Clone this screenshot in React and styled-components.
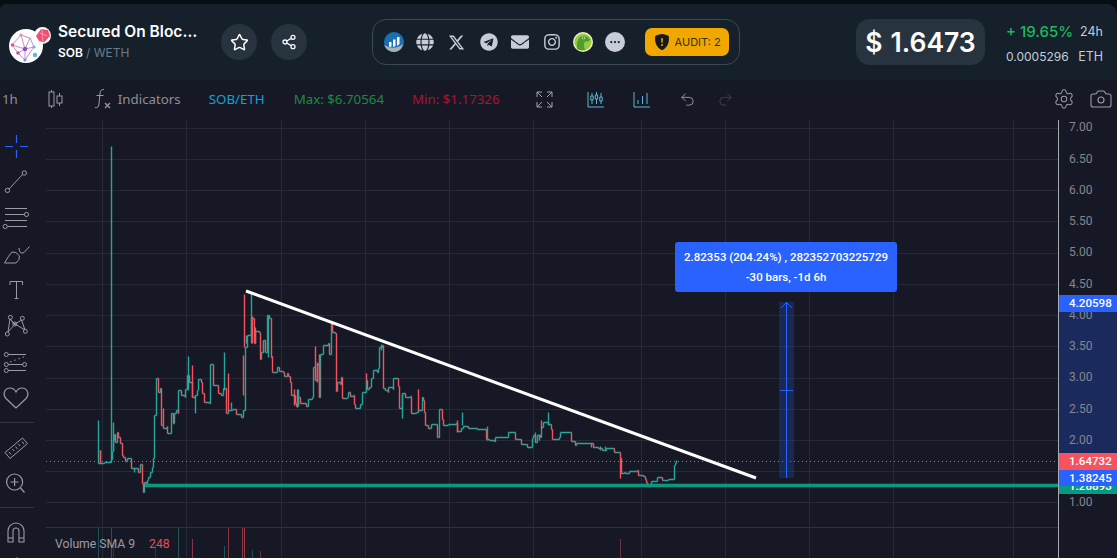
import React from 'react';
import styled, { createGlobalStyle } from 'styled-components';
import { FaGlobe, FaTelegram, FaEnvelope, FaInstagram } from 'react-icons/fa';
import { FaXTwitter } from 'react-icons/fa6';
import { BsShieldFillExclamation, BsThreeDots } from 'react-icons/bs';
import { Star, Share2, Settings, Camera, Undo2, Redo2 } from 'lucide-react';

const GlobalStyle = createGlobalStyle`
    html, body {
        margin: 0;
        padding: 0;
        background: #161925;
        overflow: hidden;
    }
    * { box-sizing: border-box; }
`

const Page = styled.div`
    width: 1117px;
    height: 558px;
    display: flex;
    flex-direction: column;
    overflow: hidden;
    background: #070e13;
    font-family: Inter, "Noto Sans", sans-serif;
`
const Header = styled.header`
    height: 76px;
    margin-top: 4px;
    flex: none;
    display: flex;
    align-items: center;
    background: #15202a;
    border-radius: 6px 10px 0 0;
`
const Avatar = styled.div`
    position: relative;
    width: 32px;
    height: 34px;
    margin-left: 9px;
    margin-top: 8px;
    flex: none;
`
const Badge = styled.div`
    position: absolute;
    top: -2px;
    left: 25px;
    width: 17px;
    height: 17px;
`
const TitleBlock = styled.div`
    margin-left: 17px;
    width: 148px;
    flex: none;
`
const Title = styled.div`
    color: #fff;
    font-size: 15.5px;
    font-weight: 600;
    line-height: 20px;
    white-space: nowrap;
    overflow: hidden;
    text-overflow: ellipsis;
    width: 143px;
`
const Pair = styled.div`
    margin-top: 2px;
    font-size: 12px;
    line-height: 18px;
    color: #fff;
    font-weight: 600;

    span { color: #6b7a8c; font-weight: 400; }
`
const RoundButton = styled.button`
    width: 36px;
    height: 36px;
    margin-left: ${p => p.$ml}px;
    border: 0;
    padding: 0;
    border-radius: 50%;
    background: #273440;
    color: #fff;
    display: flex;
    align-items: center;
    justify-content: center;
    flex: none;
`
const Socials = styled.div`
    margin-left: 65px;
    width: 368px;
    height: 46px;
    flex: none;
    display: flex;
    align-items: center;
    border: 1px solid #3a4957;
    border-radius: 14px;
    padding-left: 5px;
`
const Social = styled.div`
    width: 31.6px;
    height: 24px;
    flex: none;
    display: flex;
    align-items: center;
    justify-content: center;
    color: #c7ccd8;
`
const MoreDot = styled.div`
    width: 20px;
    height: 20px;
    border-radius: 50%;
    background: #c7ccd8;
    color: #15202a;
    display: flex;
    align-items: center;
    justify-content: center;
`
const Audit = styled.div`
    margin-left: 14.4px;
    width: 84px;
    height: 28px;
    flex: none;
    border-radius: 7px;
    background: #f0a800;
    color: #3b2d08;
    font-size: 11px;
    display: flex;
    align-items: center;
    justify-content: center;
    gap: 5px;
    white-space: nowrap;
    svg { color: #14181f; }
`
const PriceBox = styled.div`
    margin-left: 116px;
    width: 129px;
    height: 46px;
    flex: none;
    border-radius: 14px;
    background: #273440;
    color: #fff;
    font-size: 26.5px;
    font-weight: 600;
    display: flex;
    align-items: center;
    justify-content: center;
    white-space: nowrap;
    gap: 8px;
`
const Stats = styled.div`
    margin-left: 21px;
    width: 97px;
    flex: none;
    display: flex;
    flex-direction: column;
    gap: 8px;
    padding-top: 3px;
`
const StatRow = styled.div`
    display: flex;
    justify-content: space-between;
    align-items: center;
    height: 17px;
    font-size: ${p => p.$big ? 15 : 12}px;
    color: #c3ccd9;
    white-space: nowrap;
`
const Up = styled.span`
    color: #1fb85f;
    font-weight: 500;
`
const Small = styled.span`
    font-size: 12.5px;
    color: #c3ccd9;
    font-weight: 400;
`
const Toolbar = styled.div`
    height: 40px;
    flex: none;
    display: flex;
    align-items: center;
    padding-bottom: 2px;
    background: #161925;
    color: #8d8f97;
    font-family: "Noto Sans", sans-serif;
    font-size: 13.3px;
    white-space: nowrap;
`
const BarItem = styled.div`
    margin-left: ${p => p.$ml || 0}px;
    flex: none;
    display: flex;
    align-items: center;
    justify-content: center;
    color: ${p => p.$color || 'inherit'};
`
const Main = styled.div`
    flex: 1;
    min-height: 0;
    display: flex;
    background: #161925;
`
const Tools = styled.aside`
    width: 46px;
    flex: none;
    padding-top: 8px;
    overflow: hidden;
`
const Tool = styled.div`
    width: 33px;
    height: 36px;
    svg { display: block; }
`
const ToolSep = styled.div`
    width: 34px;
    height: 1px;
    margin: 6px 0;
    background: #33363f;
`
const Plot = styled.div`
    position: relative;
    width: 1012px;
    flex: none;
    svg { display: block; }
`
const Measure = styled.div`
    position: absolute;
    left: 629px;
    top: 122px;
    width: 222px;
    height: 50px;
    border-radius: 3px;
    background: #2962ff;
    color: #fff;
    font-family: Roboto, sans-serif;
    font-size: 11.5px;
    font-weight: 500;
    line-height: 20px;
    text-align: center;
    padding-top: 5px;
    white-space: nowrap;
`
const Legend = styled.div`
    position: absolute;
    left: 9px;
    top: 416px;
    display: flex;
    gap: 14px;
    font-family: Roboto, sans-serif;
    font-size: 12.2px;
    line-height: 16px;
    color: #9a9ca3;

    b { color: #e0505c; font-weight: 400; }
`
const Axis = styled.div`
    position: relative;
    flex: 1;
    border-left: 1px solid #a9abb2;
    overflow: hidden;
    font-family: Roboto, sans-serif;
    font-size: 12px;
    color: #84868e;
`
const AxisRange = styled.div`
    position: absolute;
    left: 0;
    right: 0;
    top: 182px;
    height: 176px;
    background: #1b2a5c;
`
const AxisLabels = styled.div`
    position: relative;
    margin-top: -7.6px;
    padding-left: 10px;
`
const AxisLabel = styled.div`
    height: 31.25px;
    line-height: 31.25px;
`
const Tag = styled.div`
    position: absolute;
    left: 0;
    right: 0;
    top: ${p => p.$top}px;
    height: ${p => p.$h || 17}px;
    background: ${p => p.$bg};
    color: #fff;
    font-size: 11.6px;
    font-weight: 500;
    line-height: 17px;
    padding-left: 10px;
`

// price trace in page coordinates, drawn as steps
const trace = [[98,463],[100,450],[100,463],[104,462],[110,462],[111,459],[112,451],[113,440],[114,434],[115,442],[117,432],[118,437],[120,443],[122,443],[122,455],[123,457],[125,461],[127,458],[131,458],[131,468],[138,468],[138,472],[140,464],[142,464],[142,483],[143,483],[143,492],[144,482],[146,482],[146,486],[147,480],[148,477],[150,477],[150,472],[152,467],[153,458],[154,435],[154,415],[156,390],[156,378],[158,378],[158,392],[160,388],[161,388],[161,425],[163,428],[167,426],[167,433],[171,433],[171,413],[172,413],[173,423],[174,413],[176,410],[178,413],[178,390],[181,395],[185,397],[185,389],[187,375],[189,382],[190,382],[192,397],[195,395],[197,390],[198,379],[201,382],[202,393],[204,402],[209,403],[210,364],[213,364],[213,385],[218,385],[218,393],[221,395],[223,388],[226,388],[226,413],[228,410],[232,409],[236,409],[236,414],[239,414],[241,417],[243,410],[245,355],[245,347],[247,335],[250,334],[251,318],[254,343],[255,331],[259,332],[260,359],[261,352],[263,340],[265,352],[267,315],[269,318],[271,357],[272,356],[272,372],[277,367],[279,371],[283,372],[284,376],[287,373],[288,376],[290,382],[291,395],[295,403],[296,406],[298,397],[300,403],[303,403],[306,406],[308,399],[312,397],[313,367],[315,380],[317,364],[319,397],[320,354],[323,345],[328,343],[329,354],[331,323],[332,332],[335,333],[336,391],[337,382],[340,384],[341,377],[342,377],[342,398],[347,397],[348,392],[350,396],[353,395],[354,404],[355,408],[358,408],[360,404],[362,392],[365,392],[366,380],[367,389],[369,387],[371,378],[373,370],[377,372],[378,368],[379,347],[382,345],[383,388],[385,390],[388,392],[388,387],[392,387],[393,389],[393,378],[398,378],[398,386],[399,408],[402,393],[405,397],[410,396],[411,396],[411,413],[416,412],[418,410],[422,397],[423,400],[424,412],[425,425],[428,428],[431,424],[437,424],[437,437],[439,409],[442,419],[443,425],[448,424],[456,423],[457,431],[461,428],[463,426],[468,428],[475,428],[477,429],[485,429],[486,439],[489,440],[494,441],[495,437],[507,437],[508,432],[513,432],[515,439],[519,439],[521,444],[526,444],[527,447],[531,447],[532,438],[533,435],[535,442],[537,435],[540,437],[541,427],[543,422],[548,424],[551,429],[552,439],[559,437],[560,432],[570,432],[571,441],[575,441],[575,445],[576,443],[592,443],[593,447],[598,448],[602,450],[606,450],[606,448],[613,448],[614,452],[618,452],[620,458],[621,473],[624,472],[625,473],[628,473],[629,471],[637,470],[638,475],[643,476],[645,479],[646,482],[647,486],[650,486],[651,481],[656,481],[657,477],[662,477],[662,480],[668,479],[670,479],[673,479],[674,465],[675,463],[676,460]]

// wicks that stick out of the trace
const wicks = [
    [98,420,463,0],[111,146,460,0],[113,422,451,0],[134,468,472,0],[163,408,425,1],[188,356,390,0],[192,365,397,1],
    [195,395,413,0],[224,352,390,0],[228,373,410,1],[231,402,409,0],[243,355,395,1],[244,294,347,1],[246,335,343,0],
    [251,293,343,0],[252,316,343,1],[255,327,343,1],[263,340,352,0],[268,315,357,0],[294,389,405,1],[297,389,407,1],
    [298,389,405,0],[315,346,380,1],[317,362,382,1],[319,354,397,1],[366,373,380,1],[381,344,350,0],[402,393,418,0],
    [418,389,410,1],[462,412,425,0],[457,420,432,1],[487,426,440,0],[620,458,478,1],[541,420,428,1],[548,412,425,0],
    [535,432,442,0],[539,434,440,0],[600,446,450,0],[605,446,450,0],[591,443,447,1],
]

const volumes = [
    [98,528,0,.4],[111,528,0,.45],[113,543,0,.3],[155,545,0,.25],[178,528,0,.45],[192,539,1,.5],[224,546,0,.45],
    [228,528,1,.5],[242,528,1,.55],[244,528,1,.6],[252,550,0,.4],[260,551,1,.4],[620,539,1,.4],
]

const teal = '#26a69a'
const red = '#f7525f'

function buildSegments(points){
    let up = ''
    let down = ''
    points.forEach(([x, y], i) => {
        if(i === 0) return
        const [px, py] = points[i - 1]
        up += `M${px} ${py}H${x}`
        if(y > py) down += `M${x} ${py}V${y}`
        if(y < py) up += `M${x} ${py}V${y}`
    })
    return { up, down }
}

const hLines = [128,159,190,221,253,284,315,346,378,409,440,471,502]
const vLines = [102,186,281,365,449,533,641,725,809,893,1013]
const labels = ['7.00','6.50','6.00','5.50','5.00','4.50','4.00','3.50','3.00','2.50','2.00','1.50','1.00']

function PriceChart(){
    const { up, down } = buildSegments(trace)
    return (
        <svg width="1012" height="438" viewBox="46 120 1012 438">
            {hLines.map(y => <line key={y} x1="46" x2="1058" y1={y + .5} y2={y + .5} stroke="#272a36" />)}
            <line x1="46" x2="1058" y1="527.5" y2="527.5" stroke="#2f323c" />
            {vLines.map(x => <line key={x} x1={x + .5} x2={x + .5} y1="120" y2="558" stroke="#272a36" />)}
            {volumes.map(([x, y, r, o], i) => (
                <line key={i} x1={x + .5} x2={x + .5} y1={y} y2="558" stroke={r ? red : teal} strokeOpacity={o} />
            ))}
            <line x1="46" x2="1058" y1="461.5" y2="461.5" stroke={red} strokeDasharray="1 3" />
            <rect x="779" y="302" width="15" height="176" fill="#2962ff" fillOpacity=".2" />
            <path d="M786.5 302V478M780 390.5H793M781 308L786.5 302.5L792 308" fill="none" stroke="#2962ff" strokeWidth="1" />
            <g fill="none" strokeWidth="1.4" transform="translate(.5 .5)">
                <path d={up} stroke={teal} />
                <path d={down} stroke={red} />
                {wicks.map(([x, a, b, r], i) => (
                    <line key={i} x1={x} x2={x} y1={a} y2={b} stroke={r ? red : teal} />
                ))}
            </g>
            <rect x="145" y="483.7" width="913" height="3.5" fill="#089981" />
            <line x1="246" y1="291" x2="756" y2="478" stroke="#fff" strokeWidth="3" />
        </svg>
    )
}

function Logo(){
    return (
        <svg width="34" height="34" viewBox="0 0 34 34" fill="none">
            <circle cx="17" cy="17" r="17" fill="#fff" />
            <g strokeWidth=".9">
                <path d="M3 16L12 6L21 9L25 18L16 20L9 24L3 16M12 6L16 20L21 9M9 24L16 31L25 18M16 20L16 31M3 16L16 20" stroke="#c27fd0" />
                <circle cx="3.5" cy="16" r="1.8" fill="#e8557f" />
                <circle cx="12" cy="6" r="1.6" fill="#e88fa5" />
                <circle cx="16" cy="20" r="2.2" fill="#8d4fc0" />
                <circle cx="9" cy="24" r="1.8" fill="#c24fa5" />
                <circle cx="16" cy="31" r="1.6" fill="#7a8fe0" />
                <circle cx="25" cy="18" r="1.6" fill="#5bb5e8" />
                <circle cx="26" cy="26" r="2.2" fill="#5bb5e8" />
            </g>
        </svg>
    )
}

function LogoBadge(){
    return (
        <svg width="17" height="17" viewBox="0 0 17 17">
            <circle cx="8.5" cy="8.5" r="8.5" fill="#fff" />
            <path d="M2 9L7 2L14 3L16 9L10 15.5L5 14Z" fill="#ef4f72" />
            <path d="M6 6L13 9M8 2.5L9 15" stroke="#f9b4c4" strokeWidth=".7" />
        </svg>
    )
}

function ChartLogo(){
    return (
        <svg width="20" height="20" viewBox="0 0 20 20">
            <circle cx="10" cy="10" r="10" fill="#1b6fb0" />
            <path d="M0 13Q10 19 19 12Q17 20 10 20Q3 20 0 13Z" fill="#a9b1b8" />
            <path d="M5 15V10H7.5V14.5ZM9 15V7.5H11.5V14ZM13 14V5H15.5V12Z" fill="#fff" />
        </svg>
    )
}

function GeckoLogo(){
    return (
        <svg width="20" height="20" viewBox="0 0 20 20">
            <circle cx="10" cy="10" r="10" fill="#f3eccb" />
            <circle cx="10" cy="10" r="8.6" fill="#9ccc3c" />
            <path d="M4 17Q3 9 7 5Q12 2 17 7Q17 10 12 9.5Q10 12 12 18Q8 19 4 17Z" fill="#4d9e2f" />
            <circle cx="10.5" cy="6" r="1.3" fill="#fff" />
            <circle cx="10.5" cy="6" r=".7" fill="#222" />
        </svg>
    )
}

const iconStroke = { fill: 'none', stroke: '#9a9ca3', strokeWidth: 1 }

function ToolIcon({ children }){
    return <Tool><svg width="33" height="36" viewBox="0 0 33 36" {...iconStroke}>{children}</svg></Tool>
}

function TradeTools(){
    return (
        <Tools>
            <ToolIcon><path d="M5 18.5H13M20 18.5H28M16.5 7V15M16.5 22V30" stroke="#2962ff" strokeWidth="1.2" /></ToolIcon>
            <ToolIcon>
                <path d="M9 25L22.5 10.5" />
                <circle cx="24.3" cy="9" r="2.2" /><circle cx="7.4" cy="26.4" r="2.2" />
            </ToolIcon>
            <ToolIcon>
                <path d="M5 8.5H27M5 14.5H24.5M5 20.5H27M7.5 26.5H27" />
                <circle cx="26.5" cy="14.5" r="2.1" /><circle cx="5.2" cy="26.5" r="2.1" />
            </ToolIcon>
            <ToolIcon>
                <path d="M4.5 27H16Q20 24 19.5 20Q16 15 12 16Q9 19 4.5 27Z" />
                <path d="M19 12Q19.5 19 24 16.5L29.5 10.5" />
            </ToolIcon>
            <ToolIcon><path d="M10 13V9.5H22.5V13M16.5 9.5V26.5M14.5 26.5H18.5" /></ToolIcon>
            <ToolIcon>
                <path d="M8 24L10 11L15 16L21.5 12L25 22L15 16L8 24M10.5 11L14 16" />
                <circle cx="10.3" cy="9.3" r="2" /><circle cx="22.3" cy="10.3" r="2" />
                <circle cx="14.8" cy="16" r="2" /><circle cx="7.3" cy="26" r="2" /><circle cx="25.3" cy="23.3" r="2" />
            </ToolIcon>
            <ToolIcon>
                <path d="M8.5 10.5H26M8.5 20.5H22.5M8.5 26.5H26" />
                <path d="M10 18L25 12.5" strokeDasharray="1.5 3" />
                <circle cx="6.3" cy="10.5" r="2" /><circle cx="6.3" cy="20.5" r="2" />
                <circle cx="6.3" cy="26.5" r="2" /><circle cx="24.6" cy="20.5" r="2" />
            </ToolIcon>
            <ToolIcon>
                <path d="M16 28L6 18.5C2 14 5 8 10 8C13 8 15 10 16 12C17 10 19 8 22 8C27 8 30 14 26 18.5Z" strokeWidth="1.2" />
            </ToolIcon>
            <ToolSep />
            <ToolIcon>
                <path d="M5 23.5L22.5 9L27.5 14.5L10 29.5Z" />
                <path d="M9 23L11 25.5M12.5 20L14 22M15.5 17.5L17.5 20M18.5 15L20 17M22 12.5L24 15" />
            </ToolIcon>
            <ToolIcon>
                <circle cx="14.6" cy="17" r="8" strokeWidth="1.2" />
                <path d="M10.5 17H18.5M14.6 13V21M20.5 23L24.5 27.5" strokeWidth="1.2" />
            </ToolIcon>
            <ToolSep />
            <ToolIcon>
                <path d="M8 28V17A8 8 0 0 1 24 17V28H19V17A3 3 0 0 0 13 17V28Z" strokeWidth="1.1" />
                <path d="M8 24H13M19 24H24" />
            </ToolIcon>
            <ToolIcon><path d="M14 12L17 7.5L20 12Z" /></ToolIcon>
        </Tools>
    )
}

export default function App(){
    return (
        <Page>
            <GlobalStyle />
            <Header>
                <Avatar>
                    <Logo />
                    <Badge><LogoBadge /></Badge>
                </Avatar>
                <TitleBlock>
                    <Title>Secured On Blockchain</Title>
                    <Pair>SOB <span>/ WETH</span></Pair>
                </TitleBlock>
                <RoundButton $ml={15}><Star size={19} strokeWidth={1.8} /></RoundButton>
                <RoundButton $ml={14}><Share2 size={16} strokeWidth={1.9} /></RoundButton>
                <Socials>
                    <Social><ChartLogo /></Social>
                    <Social><FaGlobe size={18} /></Social>
                    <Social><FaXTwitter size={17} /></Social>
                    <Social><FaTelegram size={18} /></Social>
                    <Social><FaEnvelope size={18} /></Social>
                    <Social><FaInstagram size={18} /></Social>
                    <Social><GeckoLogo /></Social>
                    <Social><MoreDot><BsThreeDots size={12} /></MoreDot></Social>
                    <Audit><BsShieldFillExclamation size={16} />AUDIT: 2</Audit>
                </Socials>
                <PriceBox><span>$</span><span>1.6473</span></PriceBox>
                <Stats>
                    <StatRow $big><Up>+ 19.65%</Up><Small>24h</Small></StatRow>
                    <StatRow><span>0.0005296</span><Small>ETH</Small></StatRow>
                </Stats>
            </Header>
            <Toolbar>
                <BarItem $ml={2}>1h</BarItem>
                <BarItem $ml={30}>
                    <svg width="16" height="20" viewBox="0 0 16 20" fill="none" stroke="#9a9ca3">
                        <path d="M3.5 1V19M11.5 4V17" />
                        <rect x="1" y="3" width="5" height="14" fill="#161925" />
                        <rect x="9" y="7" width="5" height="7" fill="#161925" />
                    </svg>
                </BarItem>
                <BarItem $ml={30}>
                    <svg width="17" height="22" viewBox="0 0 17 22" fill="none" stroke="#9a9ca3">
                        <path d="M10 1.5Q6.5 1 6 5L5 16Q4.5 20.5 1 19.5M2.5 7.5H9.5" />
                        <path d="M11 15L16 20M16 15L11 20" strokeWidth="1.2" />
                    </svg>
                </BarItem>
                <BarItem $ml={7}>Indicators</BarItem>
                <BarItem $ml={28} $color="#14a0d8">SOB/ETH</BarItem>
                <BarItem $ml={29} $color="#1d8a3f">Max: $6.70564</BarItem>
                <BarItem $ml={28} $color="#a8142f">Min: $1.17326</BarItem>
                <BarItem $ml={36}>
                    <svg width="17" height="17" viewBox="0 0 17 17" fill="none" stroke="#a2a4ab">
                        <path d="M1 6V1H6M1 1L6 6M11 1H16V6M16 1L11 6M1 11V16H6M1 16L6 11M11 16H16V11M16 16L11 11" />
                    </svg>
                </BarItem>
                <BarItem $ml={34}>
                    <svg width="17" height="17" viewBox="0 0 17 17" fill="none" stroke="#5bb8d4">
                        <path d="M1 1V16H17" />
                        <path d="M5 2V13M9.5 1V13M14 2V13" />
                        <path d="M3.8 5H6.2V9H3.8ZM8.3 4H10.7V8H8.3ZM12.8 6H15.2V10H12.8Z" fill="#161925" />
                    </svg>
                </BarItem>
                <BarItem $ml={29}>
                    <svg width="17" height="17" viewBox="0 0 17 17" fill="none" stroke="#5bb8d4">
                        <path d="M1 1V16H17M5 13V9M9.5 13V5M14 13V2" />
                    </svg>
                </BarItem>
                <BarItem $ml={29}><Undo2 size={17} color="#9a9ca3" strokeWidth={1.3} /></BarItem>
                <BarItem $ml={21}><Redo2 size={17} color="#3f4450" strokeWidth={1.3} /></BarItem>
                <BarItem $ml={319}><Settings size={22} color="#9a9ca3" strokeWidth={1.1} /></BarItem>
                <BarItem $ml={14}><Camera size={24} color="#9a9ca3" strokeWidth={1.1} /></BarItem>
            </Toolbar>
            <Main>
                <TradeTools />
                <Plot>
                    <PriceChart />
                    <Measure>
                        2.82353 (204.24%) , 282352703225729<br />-30 bars, -1d 6h
                    </Measure>
                    <Legend>Volume SMA 9 <b>248</b></Legend>
                </Plot>
                <Axis>
                    <AxisRange />
                    <AxisLabels>
                        {labels.map(l => <AxisLabel key={l}>{l}</AxisLabel>)}
                    </AxisLabels>
                    <Tag $top={175} $bg="#2962ff">4.20598</Tag>
                    <Tag $top={358} $h={16} $bg="#089981">1.28893</Tag>
                    <Tag $top={333} $bg="#f7525f">1.64732</Tag>
                    <Tag $top={350} $h={16} $bg="#2962ff">1.38245</Tag>
                </Axis>
            </Main>
        </Page>
    )
}
